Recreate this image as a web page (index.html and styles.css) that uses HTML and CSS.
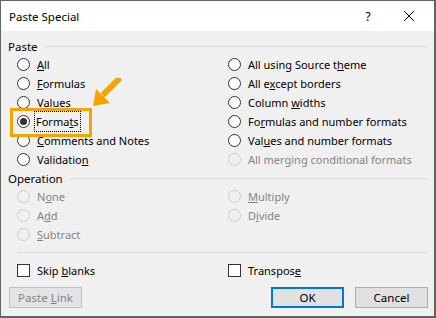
FILE: index.html
```html
<!DOCTYPE html>
<html lang="en">

<head>
  <meta charset="UTF-8">
  <title>Paste Special</title>
  <link rel="stylesheet" href="styles.css">
</head>

<body>
  <div class="dialog">
    <div class="titlebar">
      <span class="title">Paste Special</span>
      <span class="help">?</span>
      <span class="close">
        <svg width="12" height="12" viewBox="0 0 12 12"><path d="M1 1 L11 11 M11 1 L1 11" stroke="#000" stroke-width="1" /></svg>
      </span>
    </div>

    <div class="content">
      <div class="group-head"><span>Paste</span><i></i></div>
      <div class="options">
        <div class="opt"><span class="radio"></span><span><u>A</u>ll</span></div>
        <div class="opt"><span class="radio"></span><span>All using Source t<u>h</u>eme</span></div>
        <div class="opt"><span class="radio"></span><span><u>F</u>ormulas</span></div>
        <div class="opt"><span class="radio"></span><span>All e<u>x</u>cept borders</span></div>
        <div class="opt"><span class="radio"></span><span><u>V</u>alues</span></div>
        <div class="opt"><span class="radio"></span><span>Column <u>w</u>idths</span></div>
        <div class="opt"><span class="radio checked"></span><span class="focus">Forma<u>t</u>s</span></div>
        <div class="opt"><span class="radio"></span><span>Fo<u>r</u>mulas and number formats</span></div>
        <div class="opt"><span class="radio"></span><span><u>C</u>omments and Notes</span></div>
        <div class="opt"><span class="radio"></span><span>Val<u>u</u>es and number formats</span></div>
        <div class="opt"><span class="radio"></span><span>Validatio<u>n</u></span></div>
        <div class="opt disabled"><span class="radio"></span><span>All mer<u>g</u>ing conditional formats</span></div>
      </div>

      <div class="group-head"><span>Operation</span><i></i></div>
      <div class="options">
        <div class="opt disabled"><span class="radio"></span><span>N<u>o</u>ne</span></div>
        <div class="opt disabled"><span class="radio"></span><span><u>M</u>ultiply</span></div>
        <div class="opt disabled"><span class="radio"></span><span>A<u>d</u>d</span></div>
        <div class="opt disabled"><span class="radio"></span><span>D<u>i</u>vide</span></div>
        <div class="opt disabled"><span class="radio"></span><span><u>S</u>ubtract</span></div>
        <div class="opt"></div>
      </div>

      <div class="separator"></div>

      <div class="options checks">
        <div class="opt"><span class="checkbox"></span><span>Skip <u>b</u>lanks</span></div>
        <div class="opt"><span class="checkbox"></span><span>Transpos<u>e</u></span></div>
      </div>

      <div class="buttons">
        <button class="btn" disabled>Paste <u>L</u>ink</button>
        <span class="spacer"></span>
        <button class="btn default">OK</button>
        <button class="btn">Cancel</button>
      </div>
    </div>

    <!-- annotation over the dialog -->
    <div class="highlight"></div>
    <svg class="arrow" width="30" height="30" viewBox="0 0 30 30">
      <path d="M26 2 L13 15" stroke="#f5a300" stroke-width="6" stroke-linecap="square" />
      <polygon points="1,28 4,11 18,25" fill="#f5a300" />
    </svg>
  </div>
</body>

</html>
```

FILE: styles.css
```css
body {
  margin: 0;
  background: #5f6660;
  font-family: 'Noto Sans', 'Open Sans', sans-serif;
  font-size: 11px;
  color: #000;
}

.dialog {
  position: relative;
  margin: 1px;
  width: 433px;
  height: 315px;
  background: #f0f0f0;
  display: flex;
  flex-direction: column;
}

.titlebar {
  height: 30px;
  background: #ffffff;
  display: flex;
  align-items: center;
  padding-left: 8px;
}

.title {
  flex: 1;
  font-size: 11.5px;
}

.help {
  width: 32px;
  text-align: center;
  font-size: 12px;
}

.close {
  width: 50px;
  display: flex;
  justify-content: center;
}

.content {
  flex: 1;
  padding: 6px 6px 0 7px;
  display: flex;
  flex-direction: column;
}

.group-head {
  height: 18px;
  display: flex;
  align-items: center;
  gap: 6px;
  font-size: 11.5px;
}

.group-head i {
  flex: 1;
  height: 1px;
  background: #dcdcdc;
}

.options {
  display: grid;
  grid-template-columns: 211px 1fr;
  padding-left: 9px;
}

.opt {
  height: 19px;
  display: flex;
  align-items: center;
  white-space: nowrap;
}

.opt.disabled {
  color: #838383;
}

.radio {
  box-sizing: border-box;
  width: 13px;
  height: 13px;
  border: 1px solid #333333;
  border-radius: 50%;
  background: #ffffff;
  margin-right: 7px;
  display: flex;
  align-items: center;
  justify-content: center;
  flex: none;
}

.radio.checked::after {
  content: '';
  width: 7px;
  height: 7px;
  border-radius: 50%;
  background: #333333;
}

.disabled .radio {
  border-color: #cccccc;
  background: #f0f0f0;
}

.focus {
  outline: 1px dotted #000;
  padding: 2px 1px;
  margin-left: -2px;
}

.separator {
  height: 1px;
  background: #dcdcdc;
  margin: 8px 0 0 9px;
}

.checks {
  margin-top: 8px;
}

.checkbox {
  box-sizing: border-box;
  width: 13px;
  height: 13px;
  border: 1px solid #333333;
  background: #ffffff;
  margin-right: 7px;
  flex: none;
}

.buttons {
  display: flex;
  gap: 11px;
  margin-top: 7px;
  padding-left: 1px;
}

.spacer {
  flex: 1;
}

.btn {
  box-sizing: border-box;
  width: 73px;
  height: 21px;
  padding: 0;
  background: #e1e1e1;
  border: 1px solid #adadad;
  font-family: inherit;
  font-size: 11.5px;
  color: #000;
}

.btn:disabled {
  background: #e3e3e3;
  border-color: #bfbfbf;
  color: #838383;
}

.btn.default {
  border: 2px solid #0078d7;
}

.highlight {
  position: absolute;
  left: 9px;
  top: 107px;
  width: 76px;
  height: 23px;
  border: 3px solid #f5a300;
}

.arrow {
  position: absolute;
  left: 91px;
  top: 77px;
}
```
